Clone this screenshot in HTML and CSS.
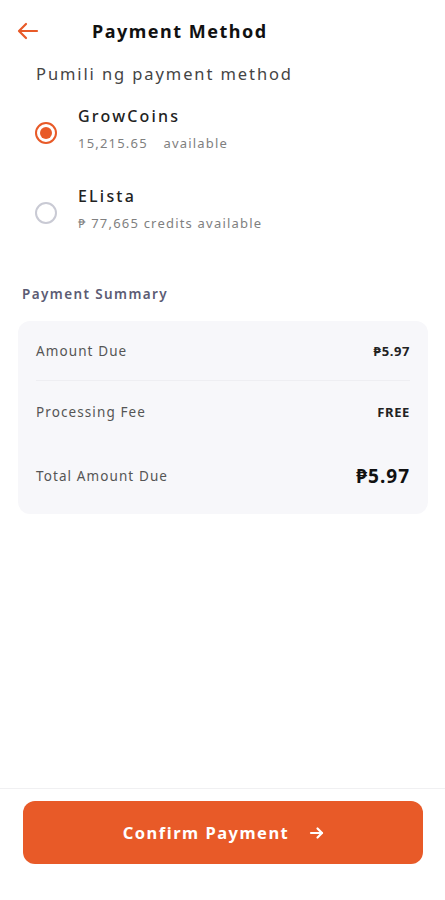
FILE: index.html
```html
<!DOCTYPE html>
<html lang="en">
<head>
  <meta charset="UTF-8">
  <meta name="viewport" content="width=device-width, initial-scale=1">
  <title>Payment Method</title>
  <link rel="stylesheet" href="styles.css">
</head>
<body>

<div class="screen">
  <header class="topbar">
    <button class="back" aria-label="Back">
      <svg width="22" height="18" viewBox="0 0 22 18" fill="none" stroke="#E85A28" stroke-width="2.2" stroke-linecap="round" stroke-linejoin="round">
        <path d="M20 9H3"/>
        <path d="M9 2L2 9l7 7"/>
      </svg>
    </button>
    <h1>Payment Method</h1>
  </header>

  <p class="hint">Pumili ng payment method</p>

  <ul class="methods">
    <li class="method">
      <span class="radio checked"></span>
      <div class="method-text">
        <div class="method-name">GrowCoins</div>
        <div class="method-sub">15,215.65 <span class="gap">available</span></div>
      </div>
    </li>
    <li class="method">
      <span class="radio"></span>
      <div class="method-text">
        <div class="method-name">ELista</div>
        <div class="method-sub">₱ 77,665 credits available</div>
      </div>
    </li>
  </ul>

  <h2>Payment Summary</h2>

  <div class="summary">
    <div class="row first">
      <span>Amount Due</span>
      <strong>₱5.97</strong>
    </div>
    <div class="row">
      <span>Processing Fee</span>
      <strong>FREE</strong>
    </div>
    <div class="row total">
      <span>Total Amount Due</span>
      <strong>₱5.97</strong>
    </div>
  </div>

  <footer class="bottom">
    <button class="confirm">
      Confirm Payment
      <svg width="16" height="14" viewBox="0 0 16 14" fill="none" stroke="#fff" stroke-width="2.2" stroke-linecap="round" stroke-linejoin="round">
        <path d="M2 7h11"/>
        <path d="M8.5 2.5L13 7l-4.5 4.5"/>
      </svg>
    </button>
  </footer>
</div>

</body>
</html>
```

FILE: styles.css
```css
*, *:after, *:before {
  box-sizing: border-box;
}
html, body {
  margin: 0;
  padding: 0;
  background: #FFF;
}
body {
  color: #222;
  font-family: "Noto Sans", "DejaVu Sans", sans-serif;
}
.screen {
  display: flex;
  flex-direction: column;
  height: 900px;
  width: 445px;
}
.topbar {
  align-items: center;
  display: flex;
  height: 34px;
  margin-top: 14px;
  padding-left: 17px;
}
.back {
  background: none;
  border: 0;
  display: flex;
  padding: 0;
  width: 75px;
}
h1 {
  color: #111;
  font-size: 18px;
  font-weight: 700;
  letter-spacing: 1.5px;
  margin: 0;
}
.hint {
  color: #444;
  font-size: 16.5px;
  letter-spacing: 1.9px;
  margin: 14px 0 0 36px;
}
.methods {
  list-style: none;
  margin: 8px 0 0;
  padding: 0;
}
.method {
  align-items: center;
  display: flex;
  height: 80px;
  padding-left: 35px;
}
.method-text {
  margin-bottom: 8px;
}
.radio {
  border: 2px solid #C9CAD4;
  border-radius: 50%;
  height: 22px;
  margin-right: 21px;
  width: 22px;
}
.radio.checked {
  border-color: #E85A28;
  display: flex;
  align-items: center;
  justify-content: center;
}
.radio.checked:after {
  background: #E85A28;
  border-radius: 50%;
  content: "";
  height: 12px;
  width: 12px;
}
.method-name {
  color: #222;
  font-size: 16px;
  font-weight: 500;
  letter-spacing: 2.2px;
  line-height: 20px;
}
.method-sub {
  color: #808080;
  font-size: 13px;
  letter-spacing: 1.2px;
  line-height: 18px;
  margin-top: 8px;
}
.method-sub .gap {
  margin-left: 11px;
}
h2 {
  color: #5C5C74;
  font-size: 13.5px;
  font-weight: 600;
  letter-spacing: 1.4px;
  margin: 32px 0 0 22px;
}
.summary {
  background: #F7F7FA;
  border-radius: 12px;
  margin: 18px 17px 0 18px;
  padding: 0 18px 5px;
}
.row {
  align-items: center;
  color: #555;
  display: flex;
  font-size: 13.5px;
  height: 62px;
  justify-content: space-between;
  letter-spacing: 1.1px;
}
.row.first {
  border-bottom: 1px solid #EEEEF2;
  height: 60px;
}
.row strong {
  color: #222;
  font-size: 13px;
  font-weight: 700;
  letter-spacing: .6px;
}
.row.total {
  height: 66px;
}
.row.total strong {
  color: #111;
  font-size: 19px;
  letter-spacing: 1px;
}
.bottom {
  border-top: 1px solid #F0F0F2;
  margin-top: auto;
  padding: 12px 22px 36px 23px;
}
.confirm {
  align-items: center;
  background: #E85A28;
  border: 0;
  border-radius: 12px;
  color: #FFF;
  display: flex;
  font-family: inherit;
  font-size: 16.5px;
  font-weight: 700;
  gap: 20px;
  height: 63px;
  justify-content: center;
  letter-spacing: 1.5px;
  padding-right: 4px;
  width: 100%;
}
```
